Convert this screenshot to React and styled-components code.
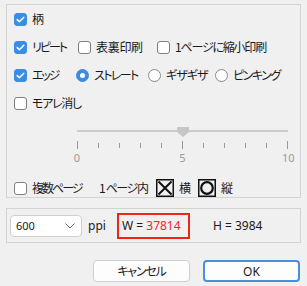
import React from 'react';
import styled, { createGlobalStyle } from 'styled-components';

const Global = createGlobalStyle`
  html, body { margin: 0; padding: 0; background: #f0f0f0; }
  body {
    font-family: "Noto Sans", "Noto Sans CJK JP", sans-serif;
    font-size: 12px;
    color: #1a1a1a;
  }
`;

const Window = styled.div`
  width: 307px;
  height: 286px;
  box-sizing: border-box;
  padding: 4px 6px 0 6px;
  display: flex;
  flex-direction: column;
  background: #f0f0f0;
  overflow: hidden;
`;

const TopGroup = styled.div`
  box-sizing: border-box;
  height: 194px;
  border: 1px solid #d3d3d3;
  padding: 0 0 0 7px;
  display: flex;
  flex-direction: column;
`;

const Row = styled.div`
  display: flex;
  align-items: center;
  height: ${p => p.$h}px;
  flex: none;
  margin-top: ${p => p.$mt || 0}px;
`;

const Item = styled.label`
  display: flex;
  align-items: center;
  gap: 5px;
  flex: none;
  width: ${p => (p.$w ? `${p.$w}px` : 'auto')};
`;

const Text = styled.span`
  font-family: "Noto Sans CJK JP", sans-serif;
  font-feature-settings: "palt";
  font-size: 12px;
  line-height: 1;
  white-space: nowrap;
  letter-spacing: ${p => p.$ls || 0}px;
`;

const Box = styled.span`
  box-sizing: border-box;
  width: 13px;
  height: 13px;
  flex: none;
  border-radius: 3px;
  display: flex;
  align-items: center;
  justify-content: center;
  background: ${p => (p.$on ? '#3a8de2' : '#ffffff')};
  border: 1px solid ${p => (p.$on ? '#3a8de2' : '#7f7f7f')};
`;

const Radio = styled.span`
  box-sizing: border-box;
  width: 13px;
  height: 13px;
  flex: none;
  border-radius: 50%;
  display: flex;
  align-items: center;
  justify-content: center;
  background: ${p => (p.$on ? '#3a8de2' : '#ffffff')};
  border: 1px solid ${p => (p.$on ? '#3a8de2' : '#8a8a8a')};
`;

const Dot = styled.span`
  width: 5px;
  height: 5px;
  border-radius: 50%;
  background: #fff;
`;

const Slider = styled.div`
  margin-left: 63px;
  margin-top: 9px;
  width: 211px;
  display: flex;
  flex-direction: column;
  flex: none;
`;

const TrackArea = styled.div`
  position: relative;
  height: 12px;
`;

const Track = styled.div`
  position: absolute;
  left: 0;
  right: 0;
  top: 4px;
  height: 2px;
  background: #cbcbcb;
`;

const Thumb = styled.svg`
  position: absolute;
  top: 1px;
  margin-left: -6px;
`;

const Ticks = styled.div`
  margin-top: 3px;
  height: 8px;
  display: flex;
  justify-content: space-between;
  align-items: center;
`;

const Tick = styled.span`
  width: 1px;
  height: ${p => (p.$major ? 8 : 5)}px;
  background: #9a9a9a;
`;

const Labels = styled.div`
  margin: 1px -6px 0;
  height: 15px;
  display: flex;
  justify-content: space-between;
  align-items: center;
`;

const TickLabel = styled.span`
  width: 12px;
  text-align: center;
  font-size: 11px;
  line-height: 15px;
  color: #9b9b9b;
  font-family: "Noto Sans", sans-serif;
`;

const Mark = styled.svg`
  flex: none;
  display: block;
`;

const BottomGroup = styled.div`
  box-sizing: border-box;
  margin-top: 10px;
  height: 35px;
  border: 1px solid #d3d3d3;
  padding-left: 3px;
  display: flex;
  align-items: center;
  flex: none;
`;

const Select = styled.div`
  box-sizing: border-box;
  width: 72px;
  height: 22px;
  background: #fff;
  border: 1px solid #d0d0d0;
  border-radius: 4px;
  padding: 0 6px 0 5px;
  display: flex;
  align-items: center;
  justify-content: space-between;
  flex: none;
`;

const Latin = styled.span`
  font-family: "Noto Sans", sans-serif;
  font-size: ${p => p.$size || 12}px;
  line-height: 1;
  white-space: nowrap;
  color: ${p => p.$color || '#1a1a1a'};
`;

const Unit = styled(Latin)`
  margin-left: 6px;
  width: 29px;
  flex: none;
`;

const Highlight = styled.div`
  box-sizing: border-box;
  width: 73px;
  height: 26px;
  border: 2px solid #f0241c;
  padding-left: 3px;
  display: flex;
  align-items: center;
  flex: none;
`;

const HValue = styled(Latin)`
  margin-left: 23px;
`;

const Buttons = styled.div`
  margin-top: 17px;
  display: flex;
  justify-content: flex-end;
  gap: 13px;
  padding-right: 1px;
`;

const Button = styled.button`
  box-sizing: border-box;
  width: 97px;
  height: 22px;
  padding: 0;
  border-radius: 4px;
  background: #fdfdfd;
  border: ${p => (p.$primary ? '2px solid #4590e0' : '1px solid #cfcfcf')};
  font-family: "Noto Sans", "Noto Sans CJK JP", sans-serif;
  font-feature-settings: "palt";
  font-size: 12px;
  letter-spacing: ${p => p.$ls || 0}px;
  color: #1a1a1a;
  display: flex;
  align-items: center;
  justify-content: center;
`;

const Check = ({ on }) => (
  <Box $on={on}>
    {on && (
      <svg width="11" height="11" viewBox="0 0 11 11">
        <path d="M2.2 5.6 L4.4 7.8 L8.8 3.2" fill="none" stroke="#fff" strokeWidth="1.5" strokeLinecap="round" strokeLinejoin="round" />
      </svg>
    )}
  </Box>
);

const RadioBtn = ({ on }) => <Radio $on={on}>{on && <Dot />}</Radio>;

const CheckItem = ({ on, label, w, ls }) => (
  <Item $w={w}>
    <Check on={on} />
    <Text $ls={ls}>{label}</Text>
  </Item>
);

const RadioItem = ({ on, label, w, ls }) => (
  <Item $w={w}>
    <RadioBtn on={on} />
    <Text $ls={ls}>{label}</Text>
  </Item>
);

export default function App() {
  const value = 5;
  const max = 10;
  const ticks = Array.from({ length: max + 1 }, (_, i) => i);
  return (
    <>
      <Global />
      <Window>
        <TopGroup>
          <Row $h={28}>
            <CheckItem on label="柄" />
          </Row>
          <Row $h={28}>
            <CheckItem on label="リピート" w={64} ls={-2} />
            <CheckItem label="表裏印刷" w={79} ls={-0.3} />
            <CheckItem label="1ページに縮小印刷" ls={-1.2} />
          </Row>
          <Row $h={28}>
            <CheckItem on label="エッジ" w={62} ls={-2.2} />
            <RadioItem on label="ストレート" w={72} ls={-1.6} />
            <RadioItem label="ギザギザ" w={67} ls={-1} />
            <RadioItem label="ピンキング" ls={-1.5} />
          </Row>
          <Row $h={28}>
            <CheckItem label="モアレ消し" ls={-1.3} />
          </Row>
          <Slider>
            <TrackArea>
              <Track />
              <Thumb width="12" height="10" viewBox="0 0 12 10" style={{ left: `${(value / max) * 100}%` }}>
                <polygon points="0,0 12,0 12,5 6,10 0,5" fill="#c6c6c6" />
              </Thumb>
            </TrackArea>
            <Ticks>
              {ticks.map(t => (
                <Tick key={t} $major={t % 5 === 0} />
              ))}
            </Ticks>
            <Labels>
              <TickLabel>0</TickLabel>
              <TickLabel>5</TickLabel>
              <TickLabel>10</TickLabel>
            </Labels>
          </Slider>
          <Row $h={18} $mt={14}>
            <CheckItem label="複数ページ" w={85} ls={-2} />
            <Item $w={57}>
              <Text $ls={-1.4}>1 ページ内</Text>
            </Item>
            <Item $w={42}>
              <Mark width="18" height="18" viewBox="0 0 18 18">
                <rect x="0.75" y="0.75" width="16.5" height="16.5" fill="none" stroke="#111" strokeWidth="1.5" />
                <path d="M2.5 2.5 L15.5 15.5 M15.5 2.5 L2.5 15.5" stroke="#111" strokeWidth="2" />
              </Mark>
              <Text>横</Text>
            </Item>
            <Item>
              <Mark width="18" height="18" viewBox="0 0 18 18">
                <rect x="0.75" y="0.75" width="16.5" height="16.5" fill="none" stroke="#111" strokeWidth="1.5" />
                <circle cx="9" cy="9" r="5.8" fill="none" stroke="#111" strokeWidth="2.2" />
              </Mark>
              <Text>縦</Text>
            </Item>
          </Row>
        </TopGroup>
        <BottomGroup>
          <Select>
            <Latin $size={11}>600</Latin>
            <svg width="10" height="6" viewBox="0 0 10 6">
              <path d="M0.5 0.5 L5 5 L9.5 0.5" fill="none" stroke="#6a6a6a" strokeWidth="1" />
            </svg>
          </Select>
          <Unit>ppi</Unit>
          <Highlight>
            <Latin>W =&nbsp;</Latin>
            <Latin $color="#f5222d">37814</Latin>
          </Highlight>
          <HValue>H = 3984</HValue>
        </BottomGroup>
        <Buttons>
          <Button $ls={-1.2}>キャンセル</Button>
          <Button $primary>OK</Button>
        </Buttons>
      </Window>
    </>
  );
}
